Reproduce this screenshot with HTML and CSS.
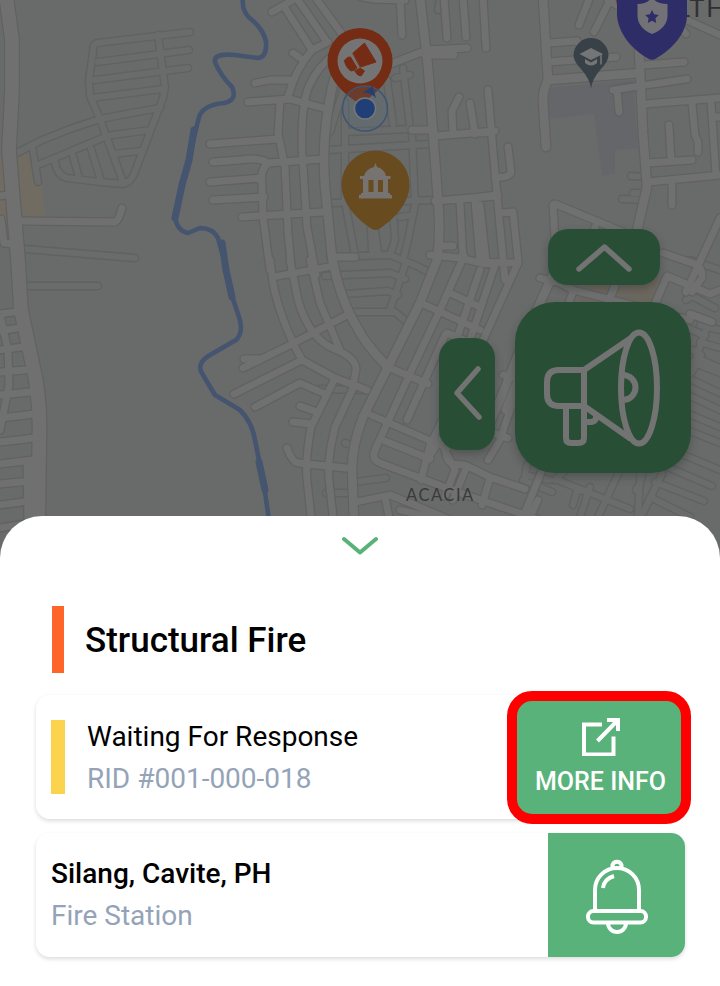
FILE: index.html
```html
<!DOCTYPE html>
<html lang="en">
<head>
<meta charset="utf-8">
<title>Structural Fire report</title>
<link rel="stylesheet" href="styles.css">
</head>
<body>
<main class="screen">
  <section class="map" aria-label="Map">
    <svg class="map-art" viewBox="0 0 720 560" width="720" height="560">
      <defs>
        <g id="lanes">
          <path d="M17 153L40 141L70 129L100 119Q130 113 160 108M190 32L97 43Q93 44 93 52L89 80L90 96L100 119L123 182M98 62L189 50M95 80L188 68M91 98L163 89M105 136L150 130M113 154L140 151M158 35L165 87L163 98L134 174Q131 182 123 184L100 182L67 178Q57 175 55 162M38 165L105 137M33 150L38 182M73 156L79 178M91 149L101 181"/>
          <path d="M24 249L135 258M27 286L98 286"/>
          <path d="M328 150L430 144M345 132L410 129M345 102L345 202L355 255M403 68L410 128M387 80L393 124M412 133L415 205L408 240L403 260M332 203L436 200M375 230L378 253M393 210L395 240L390 255M370 212L372 250M345 84L330 132M395 78L410 75M400 217L413 215"/>
          <path d="M325 276L343 275L390 273L405 279M345 294L388 291L398 295M350 312L395 312L407 322M406 262L390 310M330 257L390 255L415 265L432 274M326 493L348 493M355 482L386 478M345 443L352 445M320 389L367 390"/>
          <path d="M631 176L647 177M622 199L645 200M633 193L645 193M440 0L438 10M690 260L720 270"/>
          <path d="M570 466L555 480M560 481L600 497M590 487L580 517M620 470L598 517M640 475L638 517M662 474L641 517M600 497L630 509M655 482L704 501M665 466L712 486M672 450L720 470M682 428L720 443M684 412L720 427M690 396L720 410M692 380L720 393M650 497L690 517M692 362L720 373M706 330L662 450M645 462L640 484L636 490M573 505L577 490L583 491M523 480L552 492M527 465L525 475L550 480"/>
          <path d="M692 296L715 308M690 314L710 322M688 328L705 336M693 350L701 355L692 372M692 296L686 300M720 330L700 325M720 348L700 342M720 368L697 358"/>
        </g>
        <g id="streets">
          <path d="M20 221L115 222Q119 220 122 208M0 196L7 195M1 219L4 243L14 244M0 314L15 312M0 331L18 328M0 350L22 347M0 372L25 370M0 395L30 392M0 418L35 414M0 442L35 438M0 464L33 460M0 484L30 481M0 505L30 501M0 528L30 523M0 315L8 350L9 385L0 430M27 462L28 530M33 460L34 530"/>
          <path d="M272 12L298 -3M285 8L312 50M298 0L327 42M317 0L345 38M293 53L300 58M328 42L312 50Q295 70 288 97M336 53Q318 66 309 86Q301 105 302 150L307 227L316 275M255 83L270 80L291 80M248 102L290 99L323 108M280 102L278 133L285 167L288 233L292 275M210 144L278 139M213 162L240 160Q260 157 268 163L323 159M210 182L262 178M213 200L264 197M268 163Q259 172 262 185L263 217L270 270M242 217L323 212"/>
          <path d="M388 65L427 50L467 48M425 55L454 55M400 -3L402 35M444 -3L447 38M463 -3L466 37M361 -3L372 -1L405 0M459 97L452 111L453 134M470 103L475 134M412 130L434 130M435 136L495 131M435 201L497 196M460 203L463 258M475 202L480 262L494 265M440 246L453 246M430 255L460 258L485 264M332 257L355 257"/>
          <path d="M483 -3L486 48M590 -3L579 25M610 0L594 32M608 0L625 10M548 43L577 41L582 47M548 62L616 57M613 90L687 79M617 90L619 112M643 65L684 62M645 104L720 98M647 163L692 160M669 125L671 160M648 182L720 175M672 182L672 205M692 103L695 135L698 142L698 152M711 103L716 175M714 117L720 117M488 90L493 150L500 227L505 280M480 133L493 132M508 147L511 172Q510 178 495 177M480 197L498 195M500 213L513 212L518 260M480 262L518 263M480 205L486 260M555 240L553 205Q554 203 558 205L630 235M595 227L590 245M687 20L720 35M680 27L686 34"/>
          <path d="M270 260L273 283Q280 320 302 360L335 378L367 390M290 260L298 300Q308 335 330 347Q357 357 356 370L353 386M310 260L320 303L340 350M273 277L333 266M243 368L290 345L347 315M244 359L260 359M234 394L302 360M255 407L300 383L323 393M335 378L311 427Q305 460 307 480L311 516M354 386L335 427Q327 460 329 480L333 516M300 406L317 412M293 422L312 424M287 448Q292 462 298 463L346 468M356 502L390 495L410 503L450 520M385 497L389 517"/>
          <path d="M464 256L440 310L413 367L375 450Q371 459 380 463L460 493L540 520M421 303L480 330M448 292L480 307M388 367L428 384M371 415L433 442M385 441L430 459M445 335L407 420M447 333L480 347M480 270L458 335M465 375L430 445L421 480M495 265L470 340M440 440L455 470L445 496M518 263L480 347M447 448Q444 460 453 464L465 465L490 477L525 489M488 460L500 440L505 425L545 310M467 466L453 500M490 478L482 505M430 455L440 440M400 510L430 517M523 517L545 463M538 500L530 517M490 432L508 438M505 410L515 385M503 375L520 380M540 278L560 283L573 290L690 320M573 292L568 305M615 285L605 310"/>
          <path d="M663 253L695 264Q703 268 702 278M720 218L697 268L686 292M667 276L710 294L720 290M667 276L657 300M667 276L650 315M620 275L607 305M702 278L692 292M690 314L712 322"/>
        </g>
        <g id="avenues">
          <path d="M343 58Q333 75 328 110Q322 145 325 187L332 257Q340 300 358 329Q366 345 388 367M420 -3L428 67L433 133L438 200Q441 235 437 260L420 303L388 367L363 417Q352 445 352 470L354 520M543 -3L548 80Q543 90 543 100L546 147M548 80L640 73M639 50L643 133L647 187L636 235M555 270L530 325L500 400L480 445"/>
        </g>
        <path id="highway" d="M6 -5L12 40L12 90L9 150L13 200L18 260L21 310L32 362Q40 395 39.500 430L38 535"/>
        <filter id="soft" x="-20%" y="-20%" width="140%" height="150%"><feGaussianBlur stdDeviation="4"/></filter>
      </defs>
      <rect width="720" height="560" fill="#696b6a"/>
      <path d="M0 155L39 150L45 215L40 228L0 220Z" fill="#716c61"/>
      <path d="M585 282L660 275L650 305L578 303Z" fill="#6d685f"/>
      <path d="M548 88L633 80L638 148L615 150L615 173L602 176L594 114L548 119Z" fill="#656669"/>
      <g class="case lane"><use href="#lanes"/></g>
      <g class="fill lane"><use href="#lanes"/></g>
      <g class="case street"><use href="#streets"/></g>
      <g class="case avenue"><use href="#avenues"/></g>
      <g class="case highway"><use href="#highway"/></g>
      <g class="fill street"><use href="#streets"/></g>
      <g class="fill avenue"><use href="#avenues"/></g>
      <g class="fill highway"><use href="#highway"/></g>
      <g class="river">
        <path d="M243 -3Q241 12 252 20Q264 30 266 42Q267 57 258 58L235 55Q213 53 215 62Q220 75 232 87Q238 100 224 103Q203 105 199 117L195 133L188 163L182 185L175 213Q175 230 188 233L200 228Q213 228 218 238L224 260L230 290L239 317Q244 332 236 340L210 355Q195 364 203 375L215 395L240 410Q252 422 255 440L264 485L269 520"/>
        <path class="wide" d="M194 130L189 160L182 185L175 218M222 243L226 270L232 297M259 462L265 490"/>
      </g>

      <text class="place" x="406" y="501" textLength="69">ACACIA</text>
      <text class="place town" x="677" y="17">LTH</text>

      <path d="M616 -3Q616 10 625 25L686 -3Z" fill="#7c3014"/>
      <path d="M617 -3V15C618 34 633 50 648 58.500Q652 61 656 58.500C671 50 687 34 687 15V-3Z" fill="#2f2d68"/>
      <path d="M637.500 4Q648 4 652 -3Q656 4 667.500 4V16Q667 28 652 34Q638 28 637.500 16Z" fill="#727276"/>
      <path d="M652 10L654.100 14.300L658.800 14.900L655.400 18.200L656.200 23L652 20.700L647.800 23L648.600 18.200L645.200 14.900L649.900 14.300Z" fill="#2f2d68"/>

      <path d="M591 88.500Q590 79 581 69Q573.500 61 573.500 55.500A17.500 17.500 0 0 1 608.500 55.500Q608.500 61 601 69Q592 79 591 88.500Z" fill="#384147"/>
      <path d="M579.500 54L591 48L603 54L591 60Z M585 59L591 62.500L597 59V63Q591 68 585 63Z" fill="#737576"/>
      <path d="M601 54V64" stroke="#737576" stroke-width="1.600"/>

      <path d="M360 28A32.500 32.500 0 0 1 392.500 61C392.500 79 377 93 363 102Q360 104 357 102C344 94 327.500 79 327.500 61A32.500 32.500 0 0 1 360 28Z" fill="#742d14"/>
      <circle cx="360" cy="61" r="22.500" fill="#747474"/>
      <path d="M353 53L364.500 43L376 62L360.500 67ZM344.500 61Q346 57 350.500 57L357 68Q354 71 351 71Q346 68 344.500 61ZM355 71L360 68L364.500 71L361 76Q357 76 355 71Z" fill="#742d14" stroke="#742d14" stroke-linejoin="round"/>
      <circle cx="365" cy="108.500" r="22.500" fill="#4e6d85" fill-opacity=".22" stroke="#3d5570" stroke-width="1.500"/>
      <path d="M363 92.500L372.500 86.500L376 98Q370 92 363 92.500Z" fill="#213f77"/>
      <circle cx="365" cy="108.500" r="10.600" fill="#213f77" stroke="#777" stroke-width="1.500"/>

      <path d="M375.500 150.500A34 34 0 0 1 409.500 185C409.500 204 392 221 379 229Q375.500 231 372 229C359 221 341.500 204 341.500 185A34 34 0 0 1 375.500 150.500Z" fill="#684b1e"/>
      <path d="M375.500 163L377 167Q384.500 169 386 176H390.500V179H388V193H390V195H392V198.500H359V195H361V193H363V179H360V176H364Q366 169 374 167Z" fill="#777370"/>
      <path d="M368.500 180H373.500V192H368.500ZM378 180H383V192H378Z" fill="#684b1e"/>
    </svg>

    <button class="control up" aria-label="Expand">
      <svg viewBox="0 0 112 56"><path d="M31 40L56.500 18L81 40"/></svg>
    </button>
    <button class="control left" aria-label="Previous">
      <svg viewBox="0 0 56 112"><path d="M39 31L18 55L40 79"/></svg>
    </button>
    <button class="control alert" aria-label="Send report">
      <svg viewBox="0 0 176 171">
        <ellipse cx="124" cy="86" rx="18" ry="55.500"/>
        <path d="M69 68H44Q32 68 32 80V92Q32 104 44 104H69ZM69 68L116 36M69 104L116 137M51 105V136Q51 141 56 141H63Q69 141 69 136V104M70 120H75Q82 120 81 113M108 73A12 12 0 0 1 108 98"/>
      </svg>
    </button>
  </section>

  <section class="sheet">
    <button class="collapse" aria-label="Collapse">
      <svg viewBox="0 0 36 20"><path d="M2 3L18 16.500L34 3"/></svg>
    </button>
    <header class="heading"><h1>Structural Fire</h1></header>
    <article class="card">
      <div class="status">
        <h2>Waiting For Response</h2>
        <p>RID #001-000-018</p>
      </div>
      <button class="action more">
        <svg viewBox="0 0 38 38"><path d="M20 6.500H2V36.500H31.500V18.500M15.500 23L35 3M25 2H36V13"/></svg>
        <span>MORE INFO</span>
      </button>
    </article>
    <article class="card">
      <div class="station">
        <h2>Silang, Cavite, PH</h2>
        <p>Fire Station</p>
      </div>
      <button class="action bell" aria-label="Notify station">
        <svg viewBox="0 0 62 76">
          <path d="M9 52V32A22 22 0 0 1 53 32V52M26.500 10V7A4.700 4.700 0 0 1 35.500 7V10M22 65A9 9 0 0 0 40 65"/>
          <rect x="2" y="53" width="58" height="11.500" rx="5.500"/>
          <path d="M17 30Q18 21 28 18"/>
        </svg>
      </button>
    </article>
  </section>
</main>
</body>
</html>
```

FILE: styles.css
```css
* {
  box-sizing: border-box;
}

body {
  margin: 0;
  background: #fff;
  font-family: Roboto, "Liberation Sans", sans-serif;
}

button {
  padding: 0;
  border: 0;
  font: inherit;
}

h1, h2, p {
  margin: 0;
}

svg {
  display: block;
}

.screen {
  width: 720px;
  height: 986px;
  overflow: hidden;
}

.map {
  position: relative;
  height: 560px;
}

.map-art path {
  stroke-linecap: round;
  stroke-linejoin: round;
}

.case, .fill, .river {
  fill: none;
}

.case { stroke: #606261; }
.fill { stroke: #707070; }
.lane.fill { stroke: #6a6b6b; }
.case.lane { stroke-width: 8.8px; }
.fill.lane { stroke-width: 6px; }
.case.street { stroke-width: 9.4px; }
.fill.street { stroke-width: 6.8px; }
.case.avenue { stroke-width: 11px; }
.fill.avenue { stroke-width: 8.6px; }
.case.highway { stroke-width: 16px; }
.fill.highway { stroke-width: 13.6px; }

.river {
  stroke: #45546f;
  stroke-width: 4.6px;
}

.river .wide {
  stroke-width: 7px;
}

.place {
  font: 16.5px Lato, sans-serif;
  letter-spacing: 1.8px;
  fill: #393a3a;
}

.place.town {
  font-size: 25px;
  letter-spacing: 2px;
  fill: #303131;
}

.control {
  position: absolute;
  background: #284f36;
  box-shadow: 0 4px 9px rgba(30, 32, 34, .3);
}

.control svg {
  width: 100%;
  height: 100%;
  fill: none;
  stroke: #737373;
  stroke-width: 6px;
  stroke-linejoin: round;
}

.up {
  left: 548px;
  top: 229px;
  width: 112px;
  height: 56px;
  border-radius: 20px;
}

.left {
  left: 439px;
  top: 338px;
  width: 56px;
  height: 112px;
  border-radius: 20px;
}

.alert {
  left: 515px;
  top: 302px;
  width: 176px;
  height: 171px;
  border-radius: 40px;
}

.up svg, .left svg {
  stroke-linecap: round;
  stroke-width: 5.5px;
}

.sheet {
  position: relative;
  display: flex;
  flex-direction: column;
  gap: 14px;
  height: 470px;
  margin-top: -44px;
  padding: 20px 35px 29px 36px;
  border-radius: 42px 42px 0 0;
  background: #fff;
}

.collapse {
  width: 36px;
  height: 20px;
  margin-left: 306px;
  background: none;
}

.collapse svg {
  width: 36px;
  height: 20px;
  fill: none;
  stroke: #58b27a;
  stroke-width: 4px;
  stroke-linecap: round;
  stroke-linejoin: round;
}

.heading {
  display: flex;
  align-items: center;
  height: 67px;
  margin: 36px 0 8px 16px;
  padding: 2px 0 0 21px;
  border-left: 12px solid #ff6428;
}

.heading h1 {
  font-size: 35px;
  font-weight: 500;
  line-height: 42px;
}

.card {
  display: flex;
  align-items: center;
  justify-content: space-between;
  height: 124px;
  flex: none;
  padding-left: 15px;
  border-radius: 14px;
  box-shadow: 0 2px 4px rgba(0, 0, 0, .14);
}

.card h2, .card p {
  font-size: 28px;
  font-weight: 400;
  line-height: 42px;
}

.card p {
  color: #94a3b8;
}

.status {
  height: 74px;
  padding-left: 22px;
  border-left: 14px solid #fcd34d;
}

.status h2 {
  margin-top: -4px;
}

.station h2 {
  font-weight: 500;
}

.action {
  display: flex;
  flex-direction: column;
  align-items: center;
  background: #58b27a;
  color: #fff;
}

.action svg {
  fill: none;
  stroke: #fff;
  stroke-width: 4px;
  stroke-linejoin: round;
}

.more {
  width: 184px;
  height: 133px;
  flex: none;
  margin-right: -6px;
  padding: 17px 0 0 3px;
  border: 10px solid red;
  border-radius: 25px;
}

.more svg {
  width: 38px;
  height: 38px;
  stroke-linejoin: miter;
}

.more span {
  margin-top: 11px;
  font-size: 25px;
  font-weight: 500;
  line-height: 30px;
}

.bell {
  width: 137px;
  height: 124px;
  padding-top: 25px;
  border-radius: 0 14px 14px 0;
}

.bell svg {
  width: 62px;
  height: 76px;
}
```
